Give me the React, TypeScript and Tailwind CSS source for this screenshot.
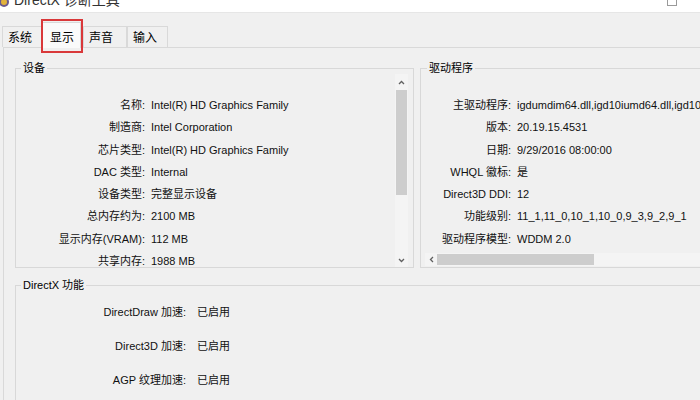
import React from "react";

const FONT = { fontFamily: '"Liberation Sans", "Noto Sans CJK SC", sans-serif' };

const deviceRows: [string, string][] = [
  ["名称:", "Intel(R) HD Graphics Family"],
  ["制造商:", "Intel Corporation"],
  ["芯片类型:", "Intel(R) HD Graphics Family"],
  ["DAC 类型:", "Internal"],
  ["设备类型:", "完整显示设备"],
  ["总内存约为:", "2100 MB"],
  ["显示内存(VRAM):", "112 MB"],
  ["共享内存:", "1988 MB"],
];

const driverRows: [string, string][] = [
  ["主驱动程序:", "igdumdim64.dll,igd10iumd64.dll,igd10iumd64.dll,igd12umd64.dll"],
  ["版本:", "20.19.15.4531"],
  ["日期:", "9/29/2016 08:00:00"],
  ["WHQL 徽标:", "是"],
  ["Direct3D DDI:", "12"],
  ["功能级别:", "11_1,11_0,10_1,10_0,9_3,9_2,9_1"],
  ["驱动程序模型:", "WDDM 2.0"],
];

const featureRows: [string, string][] = [
  ["DirectDraw 加速:", "已启用"],
  ["Direct3D 加速:", "已启用"],
  ["AGP 纹理加速:", "已启用"],
];

function Tab({ label, width, active }: { label: string; width: string; active?: boolean }) {
  if (active) {
    return (
      <div className={`relative -mb-px flex h-[26px] ${width} items-start border border-b-0 border-[#d9d9d9] bg-[#fafafa] pl-[7px] pt-[6px] text-[12px]`}>
        {label}
        {/* red annotation frame */}
        <div className="pointer-events-none absolute -left-[2px] -top-[4px] h-[34px] w-[42px] border-2 border-[#d9383a]" />
      </div>
    );
  }
  return (
    <div className={`flex h-[21px] ${width} items-center border border-b-0 border-[#d9d9d9] bg-[#f0f0f0] pl-[5px] pt-[1px] text-[12px]`}>
      {label}
    </div>
  );
}

function InfoRows({ rows, labelWidth }: { rows: [string, string][]; labelWidth: string }) {
  return (
    <div className="flex flex-col whitespace-nowrap text-[11px] leading-[22.3px] text-[#111]">
      {rows.map(([k, v]) => (
        <div key={k} className="flex">
          <span className={`${labelWidth} shrink-0 text-right`}>{k}</span>
          <span className="pl-[6px]">{v}</span>
        </div>
      ))}
    </div>
  );
}

export default function App() {
  return (
    <div className="h-[400px] w-[700px] overflow-hidden bg-[#f0f0f0]" style={FONT}>
      {/* title bar */}
      <div className="flex h-[13px] items-start overflow-hidden border-b border-[#e6e6e6] bg-white">
        <svg width="10" height="10" viewBox="0 0 10 10" className="-mt-[3px] shrink-0">
          <circle cx="4" cy="5" r="5" fill="#6b5a8e" />
          <circle cx="4" cy="5" r="3" fill="#e2b33c" />
        </svg>
        <span className="-mt-[10px] ml-[4px] text-[14px] text-[#333]">DirectX 诊断工具</span>
        <div className="flex-1" />
        <svg width="12" height="7" viewBox="0 0 12 7" className="mr-[22px] shrink-0">
          <rect x="1.5" y="-3" width="9" height="8.5" fill="none" stroke="#9a9a9a" strokeWidth="1" />
        </svg>
      </div>

      {/* tabs */}
      <div className="flex h-[34px] items-end pl-[2px]">
        <Tab label="系统" width="w-[40px]" />
        <Tab label="显示" width="w-[39px]" active />
        <div className="ml-[2px] flex">
          <Tab label="声音" width="w-[44px]" />
          <Tab label="输入" width="w-[41px]" />
        </div>
      </div>

      {/* tab panel */}
      <div className="ml-[3px] flex flex-col border-l border-t border-[#d9d9d9] pl-[11px] pt-[14px]">
        <div className="flex">
          <fieldset className="h-[206px] w-[399px] shrink-0 border border-[#d8d8d8]">
            <legend className="ml-[5px] px-[2px] text-[11px] leading-[12px]">设备</legend>
            <div className="flex h-full">
              <div className="flex-1 pt-[20px]">
                <InfoRows rows={deviceRows} labelWidth="w-[129px]" />
              </div>
              <div className="mr-[5px] flex w-[13px] flex-col items-center bg-[#f4f4f4]">
                <div className="flex h-[16px] items-center">
                  <svg width="7" height="5" viewBox="0 0 7 5">
                    <path d="M1 4 L3.5 1.5 L6 4" fill="none" stroke="#606060" strokeWidth="1.3" />
                  </svg>
                </div>
                <div className="h-[105px] w-[11px] bg-[#cdcdcd]" />
                <div className="flex-1" />
                <div className="flex h-[14px] items-center">
                  <svg width="7" height="5" viewBox="0 0 7 5">
                    <path d="M1 1 L3.5 3.5 L6 1" fill="none" stroke="#606060" strokeWidth="1.3" />
                  </svg>
                </div>
              </div>
            </div>
          </fieldset>

          <fieldset className="ml-[6px] h-[206px] w-[290px] shrink-0 border border-[#d8d8d8]">
            <legend className="ml-[6px] px-[2px] text-[11px] leading-[12px]">驱动程序</legend>
            <div className="flex h-full flex-col">
              <div className="flex-1 overflow-hidden pt-[20px]">
                <InfoRows rows={driverRows} labelWidth="w-[90px]" />
              </div>
              <div className="mb-[1px] ml-[4px] flex h-[13px] items-center bg-[#f4f4f4]">
                <div className="flex w-[12px] justify-center">
                  <svg width="5" height="7" viewBox="0 0 5 7">
                    <path d="M4 1 L1.5 3.5 L4 6" fill="none" stroke="#606060" strokeWidth="1.3" />
                  </svg>
                </div>
                <div className="h-[11px] w-[157px] bg-[#cdcdcd]" />
                <div className="flex-1" />
                <div className="mr-[10px] flex w-[10px] justify-center">
                  <svg width="5" height="7" viewBox="0 0 5 7">
                    <path d="M1 1 L3.5 3.5 L1 6" fill="none" stroke="#404040" strokeWidth="1.5" />
                  </svg>
                </div>
              </div>
            </div>
          </fieldset>
        </div>

        <fieldset className="mt-[11px] h-[140px] w-[700px] border border-[#d8d8d8]">
          <legend className="ml-[5px] px-[2px] text-[11px] leading-[12px]">DirectX 功能</legend>
          <div className="flex flex-col whitespace-nowrap pt-[4px] text-[11px] text-[#111]">
            {featureRows.map(([k, v]) => (
              <div key={k} className="flex h-[34px] items-center">
                <span className="w-[170px] shrink-0 text-right">{k}</span>
                <span className="pl-[11px]">{v}</span>
              </div>
            ))}
          </div>
        </fieldset>
      </div>
    </div>
  );
}
